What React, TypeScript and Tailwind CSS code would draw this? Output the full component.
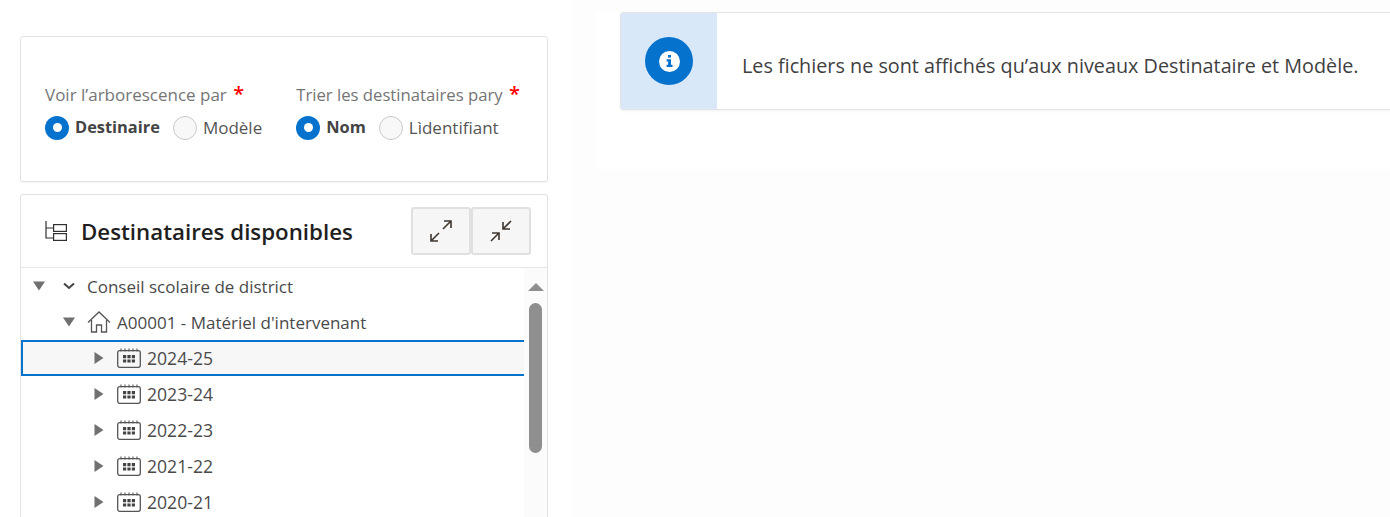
const font = { fontFamily: '"Open Sans", sans-serif' };

const Radio = ({ label, checked }: { label: string; checked?: boolean }) => (
  <label className="flex items-center gap-[6px]">
    {checked ? (
      <span className="w-6 h-6 rounded-full bg-[#0572ce] flex items-center justify-center">
        <span className="w-[9px] h-[9px] rounded-full bg-white" />
      </span>
    ) : (
      <span className="w-6 h-6 rounded-full bg-[#f8f8f8] border border-[#c8c8c8]" />
    )}
    <span className={checked ? "font-bold text-[16.4px] text-[#444]" : "text-[17px] text-[#555]"}>{label}</span>
  </label>
);

const Caret = ({ open }: { open?: boolean }) => (
  <svg width="12" height="12" viewBox="0 0 12 12" className="shrink-0 fill-[#707070]">
    {open ? <path d="M0 1.5h12L6 10.5z" /> : <path d="M1.5 0v12L10.5 6z" />}
  </svg>
);

const TreeIcon = () => (
  <svg width="22" height="22" viewBox="0 0 22 22" fill="none" stroke="#33302e" strokeWidth="1.2" className="shrink-0">
    <path d="M1 1v17h7M1 8h7" />
    <rect x="8.6" y="4.6" width="12.8" height="6.8" />
    <rect x="8.6" y="13.6" width="12.8" height="6.8" />
  </svg>
);

const Calendar = () => (
  <svg width="24" height="20" viewBox="0 0 24 20" fill="none" className="shrink-0">
    <rect x="0.7" y="2.7" width="22.6" height="16.6" rx="2" stroke="#555" strokeWidth="1.3" />
    <path d="M4 0.5v3M8 0.5v3M12 0.5v3M16 0.5v3M20 0.5v3" stroke="#555" strokeWidth="1.1" />
    <path d="M6 7h3.2v3.2H6zM10.4 7h3.2v3.2h-3.2zM14.8 7H18v3.2h-3.2zM6 11.4h3.2v3.2H6zM10.4 11.4h3.2v3.2h-3.2zM14.8 11.4H18v3.2h-3.2z" fill="#444" />
  </svg>
);

const House = () => (
  <svg width="24" height="22" viewBox="0 0 24 22" fill="none" stroke="#555" strokeWidth="1.3" className="shrink-0">
    <path d="M1 11.5 12 1l11 10.5" />
    <path d="M4.5 9v12h5v-7h5v7h5V9" />
  </svg>
);

const Expand = () => (
  <svg width="24" height="24" viewBox="0 0 24 24" fill="none" stroke="#40362e" strokeWidth="1.6">
    <path d="M14 10 22 2M15 2h7v7M2 22l8-8M2 15v7h7" />
  </svg>
);

const Collapse = () => (
  <svg width="24" height="24" viewBox="0 0 24 24" fill="none" stroke="#40362e" strokeWidth="1.6">
    <path d="M14 10 22 2M14 3v7h7M2 22l8-8M3 14h7v7" />
  </svg>
);

const years = ["2023-24", "2022-23", "2021-22", "2020-21"];

export default function App() {
  return (
    <div style={font} className="flex h-[517px] overflow-hidden bg-[#fdfdfd] text-[17px] text-[#4a4a4a]">
      <div className="w-[572px] shrink-0 bg-white pl-5 pr-6 pt-9 flex flex-col gap-3">
        <div className="h-[146px] shrink-0 rounded-[3px] border border-[#e2e2e2] shadow-[0_1px_2px_rgba(0,0,0,0.04)] pl-6 pt-[43px] flex gap-[34px]">
          <div>
            <div className="text-[#757575] leading-6 mb-[7px] whitespace-nowrap">
              Voir l’arborescence par <span className="text-[#f00] text-xl font-semibold ml-[2px]">*</span>
            </div>
            <div className="flex gap-[13px]">
              <Radio label="Destinaire" checked />
              <Radio label="Modèle" />
            </div>
          </div>
          <div>
            <div className="text-[#757575] text-[16.7px] leading-6 mb-[7px] whitespace-nowrap">
              Trier les destinataires pary <span className="text-[#f00] text-xl font-semibold ml-[2px]">*</span>
            </div>
            <div className="flex gap-[13px]">
              <Radio label="Nom" checked />
              <Radio label="Lìdentifiant" />
            </div>
          </div>
        </div>

        <div className="flex-1 rounded-t-[3px] border border-b-0 border-[#e2e2e2] flex flex-col min-h-0">
          <div className="h-[73px] shrink-0 border-b border-[#e6e6e6] flex items-center pl-6 pr-4">
            <TreeIcon />
            <h2 className="ml-[14px] text-[22.3px] font-semibold text-[#1f1f1f] whitespace-nowrap pt-[2px]">Destinataires disponibles</h2>
            <div className="ml-auto flex">
              <button className="w-[60px] h-[48px] rounded-[3px] bg-[#f6f6f6] border-2 border-[#e0e0e0] flex items-center justify-center">
                <Expand />
              </button>
              <button className="w-[60px] h-[48px] rounded-[3px] bg-[#f6f6f6] border-2 border-[#e0e0e0] flex items-center justify-center">
                <Collapse />
              </button>
            </div>
          </div>

          <div className="flex flex-1 min-h-0">
            <div className="flex-1 min-w-0">
              <div className="h-9 flex items-center pl-[12px]">
                <Caret open />
                <svg width="12" height="8" viewBox="0 0 12 8" fill="none" stroke="#444" strokeWidth="2" className="ml-[18px]">
                  <path d="M1 1.5 6 6l5-4.5" />
                </svg>
                <span className="ml-3 whitespace-nowrap pt-px">Conseil scolaire de district</span>
              </div>
              <div className="h-9 flex items-center pl-[42px]">
                <Caret open />
                <span className="ml-[12px]"><House /></span>
                <span className="ml-[6px] whitespace-nowrap pt-px">A00001 - Matériel d'intervenant</span>
              </div>
              <div className="h-9 flex items-center pl-[70px] bg-[#f7f7f7] border-y-2 border-l-2 border-[#0572ce]">
                <Caret />
                <span className="ml-3"><Calendar /></span>
                <span className="ml-[6px] text-[17.6px]">2024-25</span>
              </div>
              {years.map((y) => (
                <div key={y} className="h-9 flex items-center pl-[72px]">
                  <Caret />
                  <span className="ml-3"><Calendar /></span>
                  <span className="ml-[6px] text-[17.6px]">{y}</span>
                </div>
              ))}
            </div>
            <div className="w-[23px] shrink-0 bg-[#fbfbfb] flex flex-col items-center pt-[15px]">
              <span className="w-0 h-0 border-x-[8px] border-x-transparent border-b-[8px] border-b-[#8f8f8f]" />
              <span className="mt-[12px] w-[13px] h-[150px] shrink-0 rounded-full bg-[#8f8f8f]" />
            </div>
          </div>
        </div>
      </div>

      <div className="flex-1 min-w-0 h-[157px] bg-white mt-3 ml-6 pl-6">
        <div className="h-[98px] -mr-2 rounded-[3px] border border-[#e4e4e4] shadow-[0_1px_3px_rgba(0,0,0,0.06)] flex items-stretch">
          <div className="w-[96px] bg-[#d9e8f8] flex items-center justify-center">
            <span className="w-12 h-12 rounded-full bg-[#0572ce] flex items-center justify-center">
              <span className="w-[21px] h-[21px] rounded-full bg-white flex items-center justify-center">
                <svg width="7" height="12" viewBox="0 0 7 12" fill="#0572ce">
                  <rect x="2" y="0" width="3" height="2.6" />
                  <path d="M0.6 4.2H5v5.6h1.5V12H0.6V9.8h1.5V6.4H0.6z" />
                </svg>
              </span>
            </span>
          </div>
          <div className="flex-1 flex items-center pl-[25px] text-[#3f3f3f] text-[19.8px] whitespace-nowrap pt-[10px]">
            Les fichiers ne sont affichés qu’aux niveaux Destinataire et Modèle.
          </div>
        </div>
      </div>
    </div>
  );
}
